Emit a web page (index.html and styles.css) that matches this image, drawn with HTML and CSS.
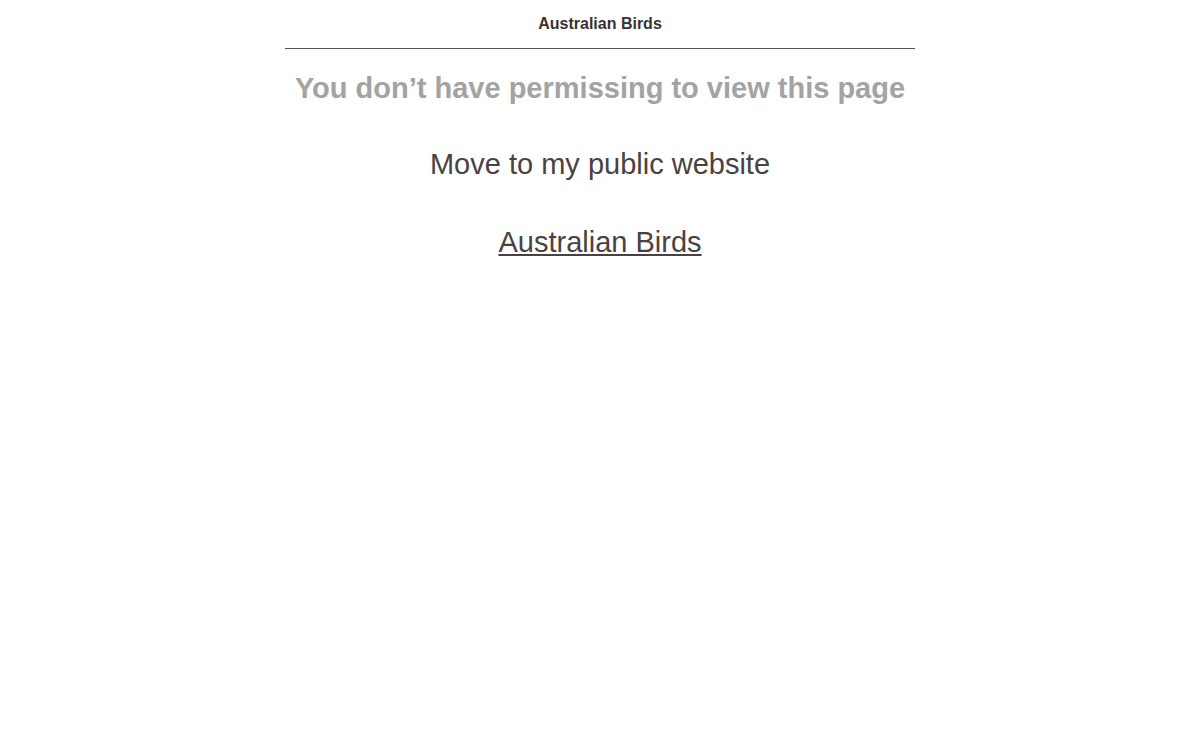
FILE: index.html
```html
<!DOCTYPE html>
<html lang="en">
<head>
<meta charset="utf-8">
<title>Australian Birds</title>
<link rel="stylesheet" href="styles.css">
</head>
<body>
<div class="page">
  <header class="site-header">
    <div class="site-title">Australian Birds</div>
  </header>
  <main class="content">
    <h1 class="denied">You don’t have permissing to view this page</h1>
    <p class="move">Move to my public website</p>
    <p class="link-row"><a class="public-link" href="#">Australian Birds</a></p>
  </main>
</div>
</body>
</html>
```

FILE: styles.css
```css
html, body {
  margin: 0;
  padding: 0;
  background: #fff;
}
body {
  font-family: "Liberation Sans", Arial, sans-serif;
  color: #4a4242;
}
.page {
  width: 630px;
  margin: 0 auto;
}
.site-header {
  border-bottom: 1px solid #5a5454;
  text-align: center;
  padding: 14px 0 15px;
}
.site-title {
  font-size: 16px;
  font-weight: bold;
  color: #3a3232;
  line-height: 19px;
}
.content {
  text-align: center;
}
.denied {
  margin: 22px 0 0;
  font-size: 29px;
  line-height: 34px;
  font-weight: bold;
  color: #a3a3a3;
  white-space: nowrap;
}
.move {
  margin: 43px 0 0;
  font-size: 29px;
  line-height: 32px;
  color: #4a4242;
}
.link-row {
  margin: 46px 0 0;
  font-size: 29px;
  line-height: 32px;
}
.public-link {
  color: #4a4242;
  text-decoration: underline;
}
```
